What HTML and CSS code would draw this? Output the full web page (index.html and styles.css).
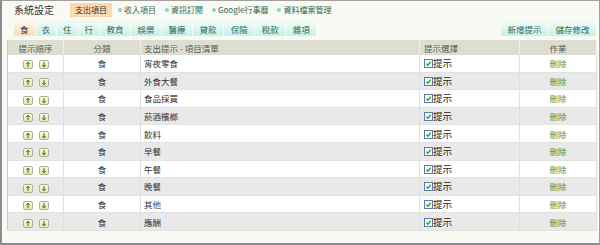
FILE: index.html
```html
<!DOCTYPE html>
<html>
<head>
    <title>系統設定</title>
    <link rel="stylesheet" href="styles.css">
</head>
<body>
    <div class="frame">
        <div class="top-bar">
            <span class="page-title">系統設定</span>
            <ul class="main-nav">
                <li class="active">支出項目</li>
                <li><i class="dot"></i>收入項目</li>
                <li><i class="dot"></i>資訊訂閱</li>
                <li><i class="dot"></i>Google行事曆</li>
                <li><i class="dot"></i>資料檔案管理</li>
            </ul>
        </div>

        <div class="tab-bar">
            <ul class="tabs">
                <li class="active">食</li>
                <li>衣</li>
                <li>住</li>
                <li>行</li>
                <li>教育</li>
                <li>娛樂</li>
                <li>醫療</li>
                <li>貸款</li>
                <li>保險</li>
                <li>稅款</li>
                <li>雜項</li>
            </ul>
            <div class="actions">
                <button class="tab-btn">新增提示</button>
                <button class="tab-btn">儲存修改</button>
            </div>
        </div>

        <table class="items">
            <thead>
                <tr>
                    <th class="col-order">提示順序</th>
                    <th class="col-cat">分類</th>
                    <th class="col-name">支出提示 - 項目清單</th>
                    <th class="col-check">提示選擇</th>
                    <th class="col-op">作業</th>
                </tr>
            </thead>
            <tbody id="rows"></tbody>
        </table>
    </div>

    <script>
        var items = ['宵夜零食', '外食大餐', '食品採買', '菸酒檳榔', '飲料', '早餐', '午餐', '晚餐', '其他', '應酬'];
        var tbody = document.getElementById('rows');
        items.forEach(function (name) {
            var tr = document.createElement('tr');
            tr.innerHTML =
                '<td class="col-order"><span class="arrow"><svg viewBox="0 0 8 8"><path d="M4 1.5v5.5M2 3.6L4 1.3l2 2.3" /></svg></span>' +
                '<span class="arrow"><svg viewBox="0 0 8 8"><path d="M4 1v5.5M2 4.4L4 6.7l2-2.3" /></svg></span></td>' +
                '<td class="col-cat">食</td>' +
                '<td class="col-name">' + name + '</td>' +
                '<td class="col-check"><span class="check"><svg viewBox="0 0 8 8"><path d="M1.6 4.2l1.7 1.7 3.2-3.9" /></svg></span><span class="hint">提示</span></td>' +
                '<td class="col-op"><a class="del">刪除</a></td>';
            tbody.appendChild(tr);
        });
    </script>
</body>
</html>
```

FILE: styles.css
```css
html, body {
    margin: 0;
    padding: 0;
}
body {
    font-family: "Noto Sans CJK TC", "Noto Sans", sans-serif;
    font-size: 8.5px;
    color: #333;
    background: #fff;
}
.frame {
    width: 600px;
    height: 245px;
    box-sizing: border-box;
    border: 1px solid #a0a0a0;
    border-left: 2px solid #8c8c8c;
    border-bottom: 2px solid #8c8c8c;
    background-color: #fafaf5;
    padding: 1px 2px 0 5px;
}
.top-bar {
    display: flex;
    align-items: center;
    height: 15px;
}
.page-title {
    font-size: 10px;
    color: #333;
    margin-left: 7px;
    width: 56px;
    line-height: 15px;
}
.main-nav {
    display: flex;
    list-style: none;
    margin: 0;
    padding: 0;
    font-size: 8px;
}
.main-nav li {
    display: flex;
    align-items: center;
    color: #2c6a50;
    margin-right: 9px;
    line-height: 14px;
}
.main-nav li.active {
    background-color: #fbdcb6;
    background-image: radial-gradient(#f0c48e 0.6px, transparent 0.9px);
    background-size: 3px 3px;
    color: #333;
    padding: 0 5px;
    margin-right: 6px;
}
.dot {
    display: inline-block;
    width: 4px;
    height: 4px;
    border-radius: 50%;
    background-color: #7ed8cf;
    margin-right: 2px;
}
.tab-bar {
    display: flex;
    justify-content: space-between;
    margin-top: 4px;
    padding: 0 0 0 7px;
    height: 15px;
}
.tabs {
    display: flex;
    list-style: none;
    margin: 0;
    padding: 0;
}
.tabs li, .tab-btn {
    height: 14px;
    line-height: 14px;
    padding: 0 6px;
    margin-right: 1px;
    color: #2c6a50;
    font-size: 8.5px;
    background: linear-gradient(#f2fcf9, #c8f0e7);
    border-top: 1px solid #e4f7f2;
}
.tabs li:nth-child(n+5) {
    padding: 0 6.5px;
}
.tabs li.active {
    background: linear-gradient(#fff4e4, #fbdcb8);
    color: #333;
}
.actions {
    display: flex;
}
.tab-btn {
    font-family: inherit;
    border: none;
    border-top: 1px solid #e4f7f2;
    height: 15px;
    cursor: pointer;
    padding: 0 6.5px;
}
.items {
    width: 590px;
    margin-top: 4px;
    border-collapse: collapse;
    border-left: 1px solid #c9c9c0;
    background-color: #fff;
}
.items th {
    background-color: #dcdfcf;
    font-weight: normal;
    color: #5a5a5a;
    height: 15px;
    padding: 0;
    border-right: 1px solid #f2f2ea;
}
.items td {
    height: 16.6px;
    padding: 0;
    border-bottom: 1px solid #e2e2e2;
    border-right: 1px solid #e0e0e0;
}
.items tbody tr:nth-child(even) td {
    background-color: #e9e9e9;
}
.col-order { width: 55px; text-align: center; }
.col-cat { width: 76px; text-align: center; }
.col-name { text-align: left; padding-left: 3px !important; }
.col-check { width: 95px; text-align: left; padding-left: 4px !important; }
.col-op { width: 76px; text-align: center; }
.items th.col-check { text-align: left; }
.arrow {
    display: inline-block;
    vertical-align: middle;
    width: 8px;
    height: 7px;
    border: 1px solid #a9b58c;
    border-radius: 2px;
    background: linear-gradient(#fcfee2, #e2ebad);
    margin: 0 3px;
}
.arrow svg {
    display: block;
    width: 8px;
    height: 7px;
    fill: none;
    stroke: #1f6a1f;
    stroke-width: 1.1;
}
.check {
    display: inline-block;
    vertical-align: -1px;
    width: 7px;
    height: 7px;
    border: 1px solid #5a7aa8;
    background-color: #f4f7fb;
}
.check svg {
    display: block;
    width: 7px;
    height: 7px;
    fill: none;
    stroke: #2aa32a;
    stroke-width: 1.5;
}
.hint {
    font-size: 9.5px;
    color: #222;
}
.del {
    color: #5c8c2c;
}
```
